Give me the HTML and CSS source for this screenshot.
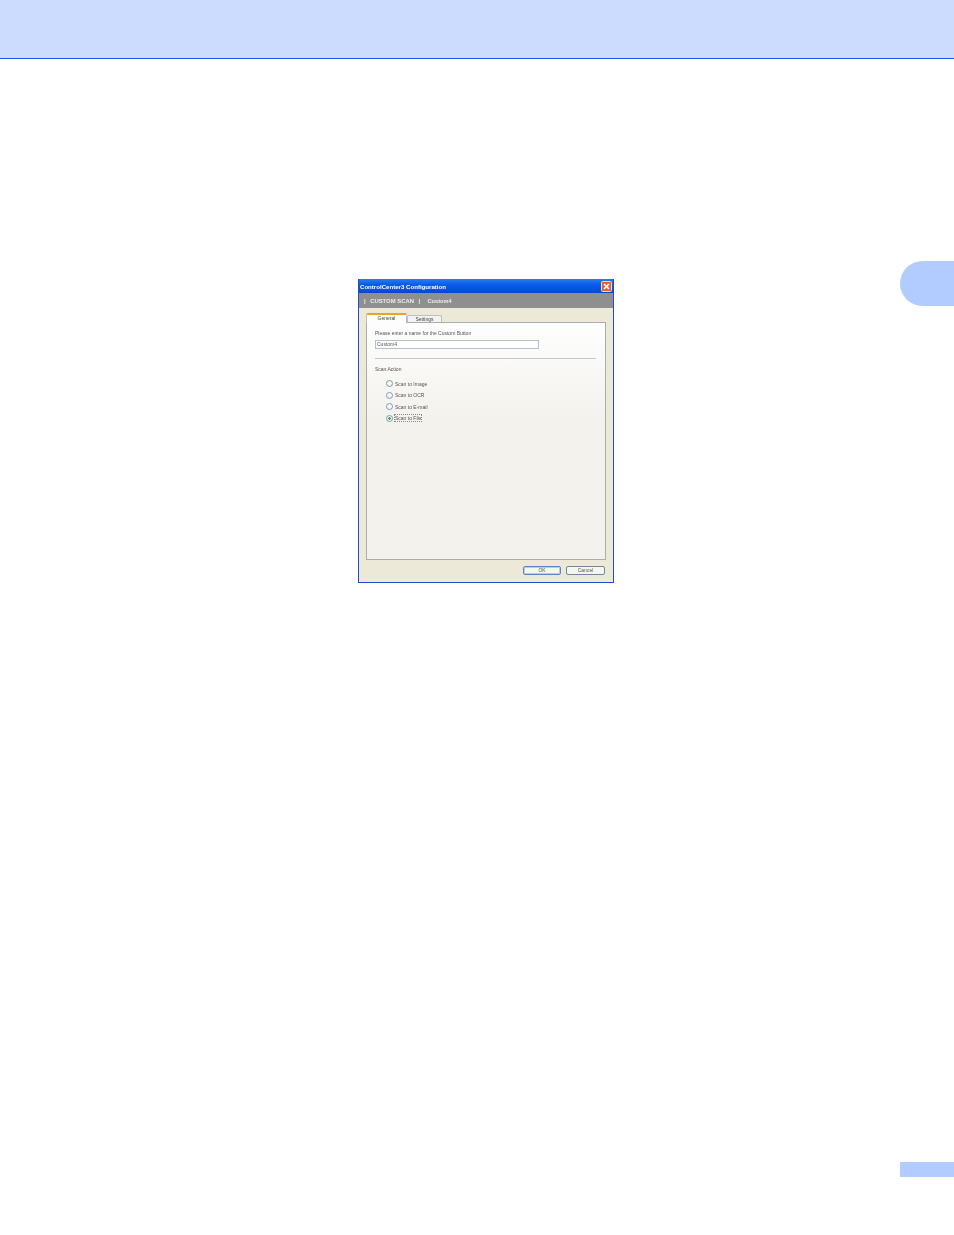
FILE: index.html
```html
<!DOCTYPE html>
<html lang="en">
<head>
    <meta charset="UTF-8">
    <title>ControlCenter3 Configuration</title>
    <link rel="stylesheet" href="styles.css">
</head>
<body>
    <div class="top-bar"></div>
    <div class="content">
        <div class="dialog">
            <div class="title-bar">
                <span class="title-text">ControlCenter3 Configuration</span>
                <svg class="close-btn" width="11" height="11" viewBox="0 0 11 11">
                    <rect x="0.5" y="0.5" width="10" height="10" rx="1" fill="#e2603c" stroke="#f3d6cc"/>
                    <path d="M3 3L8 8M8 3L3 8" stroke="#fff" stroke-width="1.6"/>
                </svg>
            </div>
            <div class="band">
                <span>|</span><span>CUSTOM SCAN</span><span>|</span><span>Custom4</span>
            </div>
            <div class="dialog-body">
                <div class="tabs">
                    <div class="tab tab-active">General</div>
                    <div class="tab">Settings</div>
                </div>
                <div class="panel">
                    <div class="field-label">Please enter a name for the Custom Button</div>
                    <div class="name-input">Custom4</div>
                    <div class="divider"></div>
                    <div class="field-label">Scan Action</div>
                    <ul class="radio-list">
                        <li><span class="radio"></span>Scan to Image</li>
                        <li><span class="radio"></span>Scan to OCR</li>
                        <li><span class="radio"></span>Scan to E-mail</li>
                        <li><span class="radio radio-on"></span><span class="focused">Scan to File</span></li>
                    </ul>
                </div>
                <div class="buttons">
                    <div class="btn btn-default">OK</div>
                    <div class="btn">Cancel</div>
                </div>
            </div>
        </div>
        <div class="side-tab"></div>
    </div>
    <div class="page-box"></div>
</body>
</html>
```

FILE: styles.css
```css
body {
    margin: 0;
    height: 1235px;
    overflow: hidden;
    background-color: #fff;
    font-family: "Liberation Sans", Arial, sans-serif;
}
.top-bar {
    height: 58px;
    background-color: #ccdcff;
    border-bottom: 1px solid #1a56d8;
}
.content {
    display: flex;
    align-items: flex-start;
    padding-top: 202px;
    padding-left: 358px;
}
.side-tab {
    width: 54px;
    height: 45px;
    margin-left: auto;
    background-color: #b3ccff;
    border-radius: 23px 0 0 23px;
}
.page-box {
    width: 54px;
    height: 15px;
    margin: 579px 0 0 auto;
    background-color: #b3ccff;
}
.dialog {
    width: 256px;
    height: 304px;
    margin-top: 18px;
    box-sizing: border-box;
    display: flex;
    flex-direction: column;
    border: 1px solid #1f4fc4;
    border-top: none;
    background-color: #ece9d8;
    filter: blur(0.25px);
}
.title-bar {
    height: 14px;
    flex: none;
    display: flex;
    align-items: center;
    justify-content: space-between;
    padding: 0 1px;
    background: linear-gradient(#2a7cf0, #0a5ce8 40%, #0550e0 80%, #0a46c8);
}
.title-text {
    color: #fff;
    font-size: 6.1px;
    font-weight: bold;
}
.close-btn {
    display: block;
}
.band {
    height: 15px;
    flex: none;
    display: flex;
    align-items: center;
    gap: 4.5px;
    padding-left: 5px;
    background-color: #8f8f8f;
    color: #eee;
    font-size: 5.9px;
    font-weight: bold;
}
.band span:nth-child(3) {
    margin-right: 3px;
}
.band span:nth-child(4) {
    font-size: 5.6px;
}
.dialog-body {
    flex: 1;
    display: flex;
    flex-direction: column;
    padding: 6px 7px 0 7px;
}
.tabs {
    display: flex;
    align-items: flex-end;
    height: 9px;
    margin-bottom: -1px;
}
.tab {
    width: 35px;
    height: 8px;
    box-sizing: border-box;
    border: 1px solid #b9c0c8;
    border-bottom: none;
    border-radius: 2px 2px 0 0;
    background-color: #f4f3ee;
    color: #444;
    font-size: 5px;
    line-height: 6px;
    text-align: center;
}
.tab-active {
    width: 41px;
    height: 10px;
    border-top: 2px solid #f0a030;
    line-height: 7px;
    background-color: #fdfdfc;
    position: relative;
    z-index: 1;
}
.panel {
    height: 238px;
    box-sizing: border-box;
    padding: 7px 9px 0 8px;
    border: 1px solid #a8adb0;
    background: linear-gradient(#fefefe, #f3f2ed 40%, #f3f2ed);
    color: #555;
    font-size: 5px;
}
.field-label {
    line-height: 7px;
}
.name-input {
    width: 164px;
    height: 9px;
    box-sizing: border-box;
    margin-top: 3px;
    padding-left: 1px;
    line-height: 7px;
    border: 1px solid #b4c0cc;
    background-color: #fff;
}
.divider {
    height: 1px;
    margin: 9px 0 7px 0;
    background-color: #c8c8c4;
}
.radio-list {
    list-style-type: none;
    margin: 7px 0 0 0;
    padding: 0 0 0 11px;
}
.radio-list li {
    display: flex;
    align-items: center;
    height: 7px;
    margin-bottom: 4.6px;
}
.radio {
    width: 7px;
    height: 7px;
    box-sizing: border-box;
    flex: none;
    margin-right: 2px;
    border: 1px solid #7d99b2;
    border-radius: 50%;
    background-color: #f8f8f6;
}
.radio-on {
    background: radial-gradient(circle, #3fa83f 0 1px, #f8f8f6 1.6px);
}
.focused {
    outline: 1px dotted #888;
}
.buttons {
    display: flex;
    justify-content: flex-end;
    gap: 5px;
    margin: 6px 1px 0 0;
}
.btn {
    width: 39px;
    height: 9px;
    box-sizing: border-box;
    border: 1px solid #6f879f;
    border-radius: 2px;
    background-color: #f6f6f0;
    color: #555;
    font-size: 5px;
    line-height: 7px;
    text-align: center;
}
.btn-default {
    width: 38px;
    border-color: #5f86bc;
    box-shadow: inset 0 0 0 1px #b8cce8;
}
```
